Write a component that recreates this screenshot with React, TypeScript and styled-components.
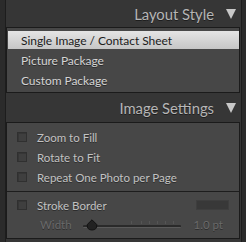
import styled, {createGlobalStyle} from 'styled-components';

const GlobalStyle = createGlobalStyle`
    html, body {
        margin: 0;
        padding: 0;
        background: #2b2b2b;
        font-family: Lato, "Open Sans", sans-serif;
    }
`;

const Frame = styled.div`
    margin-left: 5px;
    width: 237px;
    height: 242px;
    background: #363636;
    border-left: 1px solid #1d1d1d;
    border-right: 1px solid #1d1d1d;
    box-sizing: border-box;
    overflow: hidden;
`;

const Header = styled.div<{ $height: number }>`
    height: ${p => p.$height}px;
    display: flex;
    align-items: center;
    justify-content: flex-end;
    gap: 12px;
    padding-right: 5px;
    color: #b6b6b6;
    font-size: 14.8px;
    text-shadow: 0 1px 0 #1e1e1e;
`;

const Triangle = styled.span`
    width: 0;
    height: 0;
    border-left: 5px solid transparent;
    border-right: 5px solid transparent;
    border-top: 10px solid #c8c8c8;
    margin-top: 1px;
`;

const Panel = styled.div`
    margin-right: 1px;
    background: #474747;
    border: 1px solid #1b1b1b;
`;

const List = styled.div`
    display: flex;
    flex-direction: column;
    gap: 2px;
    padding: 3px 0 3px 1px;
`;

const Item = styled.div<{ $selected?: boolean }>`
    height: 18px;
    display: flex;
    align-items: center;
    padding-left: 13px;
    font-size: 12px;
    letter-spacing: -0.05px;
    color: ${p => p.$selected ? '#1c1c1c' : '#d4d4d4'};
    background: ${p => p.$selected ? 'linear-gradient(#e4e4e4, #c6c6c6)' : 'transparent'};
    text-shadow: ${p => p.$selected ? 'none' : '0 1px 0 #2a2a2a'};
`;

const Group = styled.div<{ $top: number, $bottom: number }>`
    padding: ${p => p.$top}px 10px ${p => p.$bottom}px 10px;
    & + & {
        border-top: 1px solid #1d1d1d;
    }
`;

const Row = styled.div<{ $height?: number }>`
    height: ${p => p.$height ?? 20}px;
    display: flex;
    align-items: center;
    gap: 10px;
`;

const Check = styled.span`
    width: 8px;
    height: 8px;
    flex: none;
    background: #3f3f3f;
    border: 1px solid #303030;
    box-shadow: inset 1px 1px 0 #363636;
`;

const Label = styled.span<{ $disabled?: boolean }>`
    font-size: 11.5px;
    white-space: nowrap;
    color: ${p => p.$disabled ? '#6a6a6a' : '#c2c2c2'};
    text-shadow: 0 1px 0 #2d2d2d;
`;

const Swatch = styled.span`
    margin-left: auto;
    width: 31px;
    height: 8px;
    background: #383838;
    border: 1px solid #3e3e3e;
`;

const WidthRow = styled(Row)`
    padding-left: 23px;
    gap: 0;
`;

const Slider = styled.div`
    position: relative;
    flex: none;
    width: 98px;
    height: 12px;
    margin-left: 11px;
`;

const Track = styled.div`
    position: absolute;
    left: 0;
    right: 0;
    top: 6px;
    height: 2px;
    background: #2a2a2a;
    border-bottom: 1px solid #5a5a5a;
    border-radius: 1px;
`;

const Tick = styled.span`
    position: absolute;
    top: 2px;
    width: 1px;
    height: 3px;
    background: #555;
`;

const Thumb = styled.svg`
    position: absolute;
    left: 3px;
    top: 0;
`;

const Value = styled(Label)`
    margin-left: auto;
    margin-right: 6px;
`;

const ticks = [48, 58, 66, 74, 82, 90];

export default function App() {
    return (
        <>
            <GlobalStyle/>
            <Frame>
                <Header $height={27}>
                    <span>Layout Style</span>
                    <Triangle/>
                </Header>
                <Panel>
                    <List>
                        <Item $selected>Single Image / Contact Sheet</Item>
                        <Item>Picture Package</Item>
                        <Item>Custom Package</Item>
                    </List>
                </Panel>
                <Header $height={29}>
                    <span>Image Settings</span>
                    <Triangle/>
                </Header>
                <Panel>
                    <Group $top={4} $bottom={4}>
                        <Row><Check/><Label>Zoom to Fill</Label></Row>
                        <Row><Check/><Label>Rotate to Fit</Label></Row>
                        <Row><Check/><Label>Repeat One Photo per Page</Label></Row>
                    </Group>
                    <Group $top={3} $bottom={4}>
                        <Row><Check/><Label>Stroke Border</Label><Swatch/></Row>
                        <WidthRow $height={19}>
                            <Label $disabled>Width</Label>
                            <Slider>
                                {ticks.map(t => <Tick key={t} style={{left: t}}/>)}
                                <Track/>
                                <Thumb width="12" height="12" viewBox="0 0 12 12">
                                    <path d="M6 0.8 L10.8 5.6 Q11.2 11 6 11 Q0.8 11 1.2 5.6 Z" fill="#222" stroke="#121212"/>
                                </Thumb>
                            </Slider>
                            <Value $disabled>1.0 pt</Value>
                        </WidthRow>
                    </Group>
                </Panel>
            </Frame>
        </>
    );
}
